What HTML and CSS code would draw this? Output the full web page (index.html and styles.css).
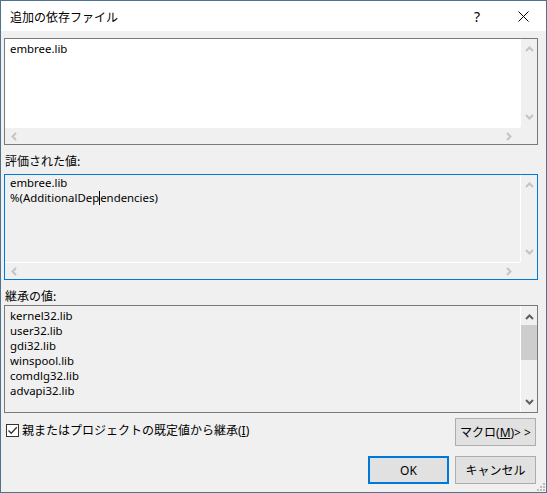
FILE: index.html
```html
<!DOCTYPE html>
<html lang="ja">
<head>
    <meta charset="UTF-8">
    <title>追加の依存ファイル</title>
    <link rel="stylesheet" href="styles.css">
</head>
<body>
    <div class="dialog">
        <div class="titlebar">
            <span class="title">追加の依存ファイル</span>
            <span class="tb-btn help">?</span>
            <span class="tb-btn close">
                <svg width="11" height="11" viewBox="0 0 11 11"><path d="M0.5 0.5L10.5 10.5M10.5 0.5L0.5 10.5" stroke="#000" stroke-width="1" fill="none"/></svg>
            </span>
        </div>

        <div class="content">
            <!-- 編集ボックス -->
            <div class="box box-edit">
                <div class="box-text">embree.lib</div>
                <div class="vbar">
                    <svg class="arr" width="9" height="6" viewBox="0 0 9 6"><path d="M1 5L4.5 1.5L8 5" stroke="#c4c4c4" stroke-width="2" fill="none"/></svg>
                    <svg class="arr" width="9" height="6" viewBox="0 0 9 6"><path d="M1 1L4.5 4.5L8 1" stroke="#c4c4c4" stroke-width="2" fill="none"/></svg>
                </div>
                <div class="hbar">
                    <svg class="arr" width="6" height="9" viewBox="0 0 6 9"><path d="M5 1L1.5 4.5L5 8" stroke="#c4c4c4" stroke-width="2" fill="none"/></svg>
                    <svg class="arr" width="6" height="9" viewBox="0 0 6 9"><path d="M1 1L4.5 4.5L1 8" stroke="#c4c4c4" stroke-width="2" fill="none"/></svg>
                </div>
                <div class="corner"></div>
            </div>

            <div class="label label-eval">評価された値:</div>
            <div class="box box-eval">
                <div class="box-text">embree.lib<br>%(AdditionalDep<span class="caret"></span>endencies)</div>
                <div class="vbar">
                    <svg class="arr" width="9" height="6" viewBox="0 0 9 6"><path d="M1 5L4.5 1.5L8 5" stroke="#c4c4c4" stroke-width="2" fill="none"/></svg>
                    <svg class="arr" width="9" height="6" viewBox="0 0 9 6"><path d="M1 1L4.5 4.5L8 1" stroke="#c4c4c4" stroke-width="2" fill="none"/></svg>
                </div>
                <div class="hbar">
                    <svg class="arr" width="6" height="9" viewBox="0 0 6 9"><path d="M5 1L1.5 4.5L5 8" stroke="#c4c4c4" stroke-width="2" fill="none"/></svg>
                    <svg class="arr" width="6" height="9" viewBox="0 0 6 9"><path d="M1 1L4.5 4.5L1 8" stroke="#c4c4c4" stroke-width="2" fill="none"/></svg>
                </div>
                <div class="corner"></div>
            </div>

            <div class="label label-inherit">継承の値:</div>
            <div class="box box-list">
                <div class="box-text">
                    kernel32.lib<br>user32.lib<br>gdi32.lib<br>winspool.lib<br>comdlg32.lib<br>advapi32.lib
                </div>
                <div class="vbar vbar-list">
                    <svg class="arr" width="9" height="6" viewBox="0 0 9 6"><path d="M1 5L4.5 1.5L8 5" stroke="#606060" stroke-width="2" fill="none"/></svg>
                    <div class="thumb"></div>
                    <svg class="arr down" width="9" height="6" viewBox="0 0 9 6"><path d="M1 1L4.5 4.5L8 1" stroke="#606060" stroke-width="2" fill="none"/></svg>
                </div>
            </div>

            <div class="row-options">
                <label class="check">
                    <span class="checkbox">
                        <svg width="11" height="11" viewBox="0 0 11 11"><path d="M1.5 5.5L4.2 8.3L9.8 2.2" stroke="#333" stroke-width="1.3" fill="none"/></svg>
                    </span>
                    <span>親またはプロジェクトの既定値から継承(<u>I</u>)</span>
                </label>
                <button class="btn">マクロ(<u>M</u>)&gt; &gt;</button>
            </div>

            <div class="row-buttons">
                <button class="btn btn-default">OK</button>
                <button class="btn">キャンセル</button>
            </div>
        </div>

        <svg class="grip" width="11" height="11" viewBox="0 0 11 11">
            <rect x="8" y="2" width="2" height="2" fill="#bcbcbc"/>
            <rect x="5" y="5" width="2" height="2" fill="#bcbcbc"/>
            <rect x="8" y="5" width="2" height="2" fill="#bcbcbc"/>
            <rect x="2" y="8" width="2" height="2" fill="#bcbcbc"/>
            <rect x="5" y="8" width="2" height="2" fill="#bcbcbc"/>
            <rect x="8" y="8" width="2" height="2" fill="#bcbcbc"/>
        </svg>
    </div>
</body>
</html>
```

FILE: styles.css
```css
body {
    margin: 0;
    font-family: "Noto Sans", "Noto Sans CJK JP", sans-serif;
    font-size: 11.4px;
    color: #000;
    background: #f0f0f0;
}
.dialog {
    position: relative;
    box-sizing: border-box;
    width: 547px;
    height: 493px;
    border: 1px solid #4d7390;
    background: #f0f0f0;
}
.titlebar {
    display: flex;
    align-items: center;
    height: 30px;
    background: #fff;
}
.title {
    flex: 1;
    padding-left: 9px;
    font-family: "Noto Sans CJK JP", sans-serif;
    font-size: 12px;
}
.tb-btn {
    display: flex;
    align-items: center;
    justify-content: center;
    width: 46px;
    height: 30px;
}
.help {
    font-size: 14px;
}
.content {
    padding: 7px 8px 0 3px;
}
.box {
    display: grid;
    grid-template-columns: 1fr 17px;
    grid-template-rows: 1fr 17px;
    box-sizing: border-box;
    border: 1px solid #7a7a7a;
}
.box-edit {
    height: 107px;
    background: #fff;
}
.box-eval {
    height: 106px;
    border-color: #0078d7;
    background: #f0f0f0;
}
.box-list {
    grid-template-rows: 1fr;
    height: 108px;
    background: #f0f0f0;
}
.box-text {
    padding: 2px 5px 0;
    line-height: 15px;
}
.box-eval .box-text {
    padding-top: 0;
}
.box-list .box-text {
    padding-top: 2px;
}
.caret {
    display: inline-block;
    width: 0;
    height: 14px;
    border-left: 1px solid #000;
    vertical-align: -3px;
}
.vbar {
    display: flex;
    flex-direction: column;
    align-items: center;
    justify-content: space-between;
    padding: 7px 0 7px;
    box-sizing: border-box;
    background: #f0f0f0;
    border-left: 1px solid #fff;
}
.hbar {
    display: flex;
    align-items: center;
    justify-content: space-between;
    padding: 0 8px 0 6px;
    box-sizing: border-box;
    background: #f0f0f0;
    border-top: 1px solid #fff;
}
.corner {
    background: #f0f0f0;
}
.vbar-list {
    justify-content: flex-start;
    padding: 8px 0 7px;
    align-items: stretch;
}
.vbar-list .arr {
    align-self: center;
}
.thumb {
    height: 35px;
    margin-top: 5px;
    background: #cdcdcd;
}
.vbar-list .down {
    margin-top: auto;
}
.label {
    line-height: 16px;
    padding-left: 1px;
    font-family: "Noto Sans CJK JP", sans-serif;
    font-size: 12px;
}
.label-eval {
    padding-top: 8px;
    padding-bottom: 5px;
}
.label-inherit {
    padding-top: 8px;
    padding-bottom: 1px;
}
.row-options {
    display: flex;
    justify-content: space-between;
    align-items: flex-start;
    margin-top: 5px;
    padding-right: 2px;
}
.check {
    display: flex;
    align-items: center;
    gap: 3px;
    margin-top: 3px;
    padding-left: 2px;
    font-size: 12px;
}
.checkbox {
    display: flex;
    align-items: center;
    justify-content: center;
    box-sizing: border-box;
    width: 13px;
    height: 13px;
    border: 1px solid #333;
    background: #fff;
}
.row-buttons {
    display: flex;
    justify-content: flex-end;
    gap: 6px;
    margin-top: 10px;
    padding-right: 2px;
}
.btn {
    box-sizing: border-box;
    width: 81px;
    height: 28px;
    padding: 0;
    border: 1px solid #adadad;
    background: #e1e1e1;
    font-family: "Noto Sans", "Noto Sans CJK JP", sans-serif;
    font-size: 12px;
    color: #000;
}
.btn-default {
    border: 2px solid #0078d7;
}
.grip {
    position: absolute;
    right: 0;
    bottom: 0;
}
```
